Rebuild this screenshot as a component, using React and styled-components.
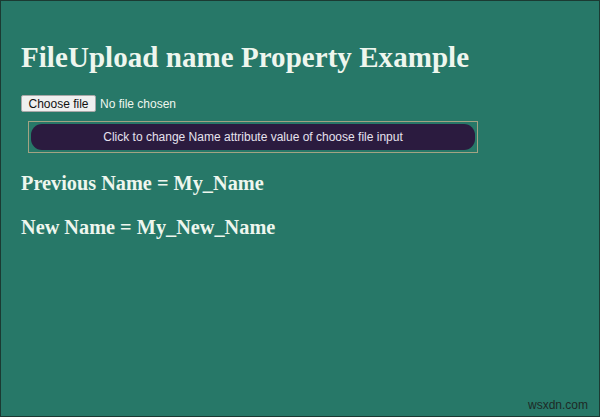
import React from "react";
import styled, { createGlobalStyle } from "styled-components";

const Global = createGlobalStyle`
  html, body { margin: 0; padding: 0; background: #267868; }
  #root { width: 600px; height: 417px; }
`;

const Page = styled.div`
  box-sizing: border-box;
  width: 600px;
  height: 417px;
  background: #277868;
  border: 1px solid #1b3a32;
  padding: 39px 0 0 20px;
  position: relative;
  font-family: "Liberation Serif", "Times New Roman", serif;
  color: #eef6ee;
`;

const Title = styled.h1`
  margin: 0;
  font-size: 29px;
  line-height: 34px;
  font-weight: bold;
  letter-spacing: 0.05px;
`;

const FileRow = styled.div`
  display: flex;
  align-items: center;
  gap: 4px;
  margin-top: 21px;
  font-family: "Liberation Sans", Arial, sans-serif;
  font-size: 12px;
`;

const FileButton = styled.span`
  box-sizing: border-box;
  height: 17px;
  width: 75px;
  display: inline-flex;
  align-items: center;
  justify-content: center;
  background: #efefef;
  color: #111;
  border: 1px solid #a8a8a8;
  border-radius: 2px;
`;

const FileLabel = styled.span`
  color: #eef6ee;
`;

const ButtonFrame = styled.div`
  box-sizing: border-box;
  width: 450px;
  margin: 9px 0 0 7px;
  padding: 2px;
  border: 1px solid #a3a383;
`;

const ActionButton = styled.button`
  display: block;
  width: 100%;
  height: 26px;
  border: none;
  border-radius: 11px;
  background: #2b1b3f;
  color: #e6e2ee;
  font-family: "Liberation Sans", Arial, sans-serif;
  font-size: 12px;
  cursor: pointer;
`;

const NameLine = styled.h3`
  margin: ${p => p.$top}px 0 0 0;
  font-size: 20.3px;
  line-height: 22px;
  font-weight: bold;
`;

const Watermark = styled.div`
  position: absolute;
  right: 11px;
  bottom: 4px;
  font-family: "Liberation Sans", Arial, sans-serif;
  font-size: 12px;
  color: #1e2a26;
`;

export default function App() {
  return (
    <>
      <Global />
      <Page>
        <Title>FileUpload name Property Example</Title>
        <FileRow>
          <FileButton>Choose file</FileButton>
          <FileLabel>No file chosen</FileLabel>
        </FileRow>
        <ButtonFrame>
          <ActionButton>Click to change Name attribute value of choose file input</ActionButton>
        </ButtonFrame>
        <NameLine $top={19}>Previous Name = My_Name</NameLine>
        <NameLine $top={22}>New Name = My_New_Name</NameLine>
        <Watermark>wsxdn.com</Watermark>
      </Page>
    </>
  );
}
